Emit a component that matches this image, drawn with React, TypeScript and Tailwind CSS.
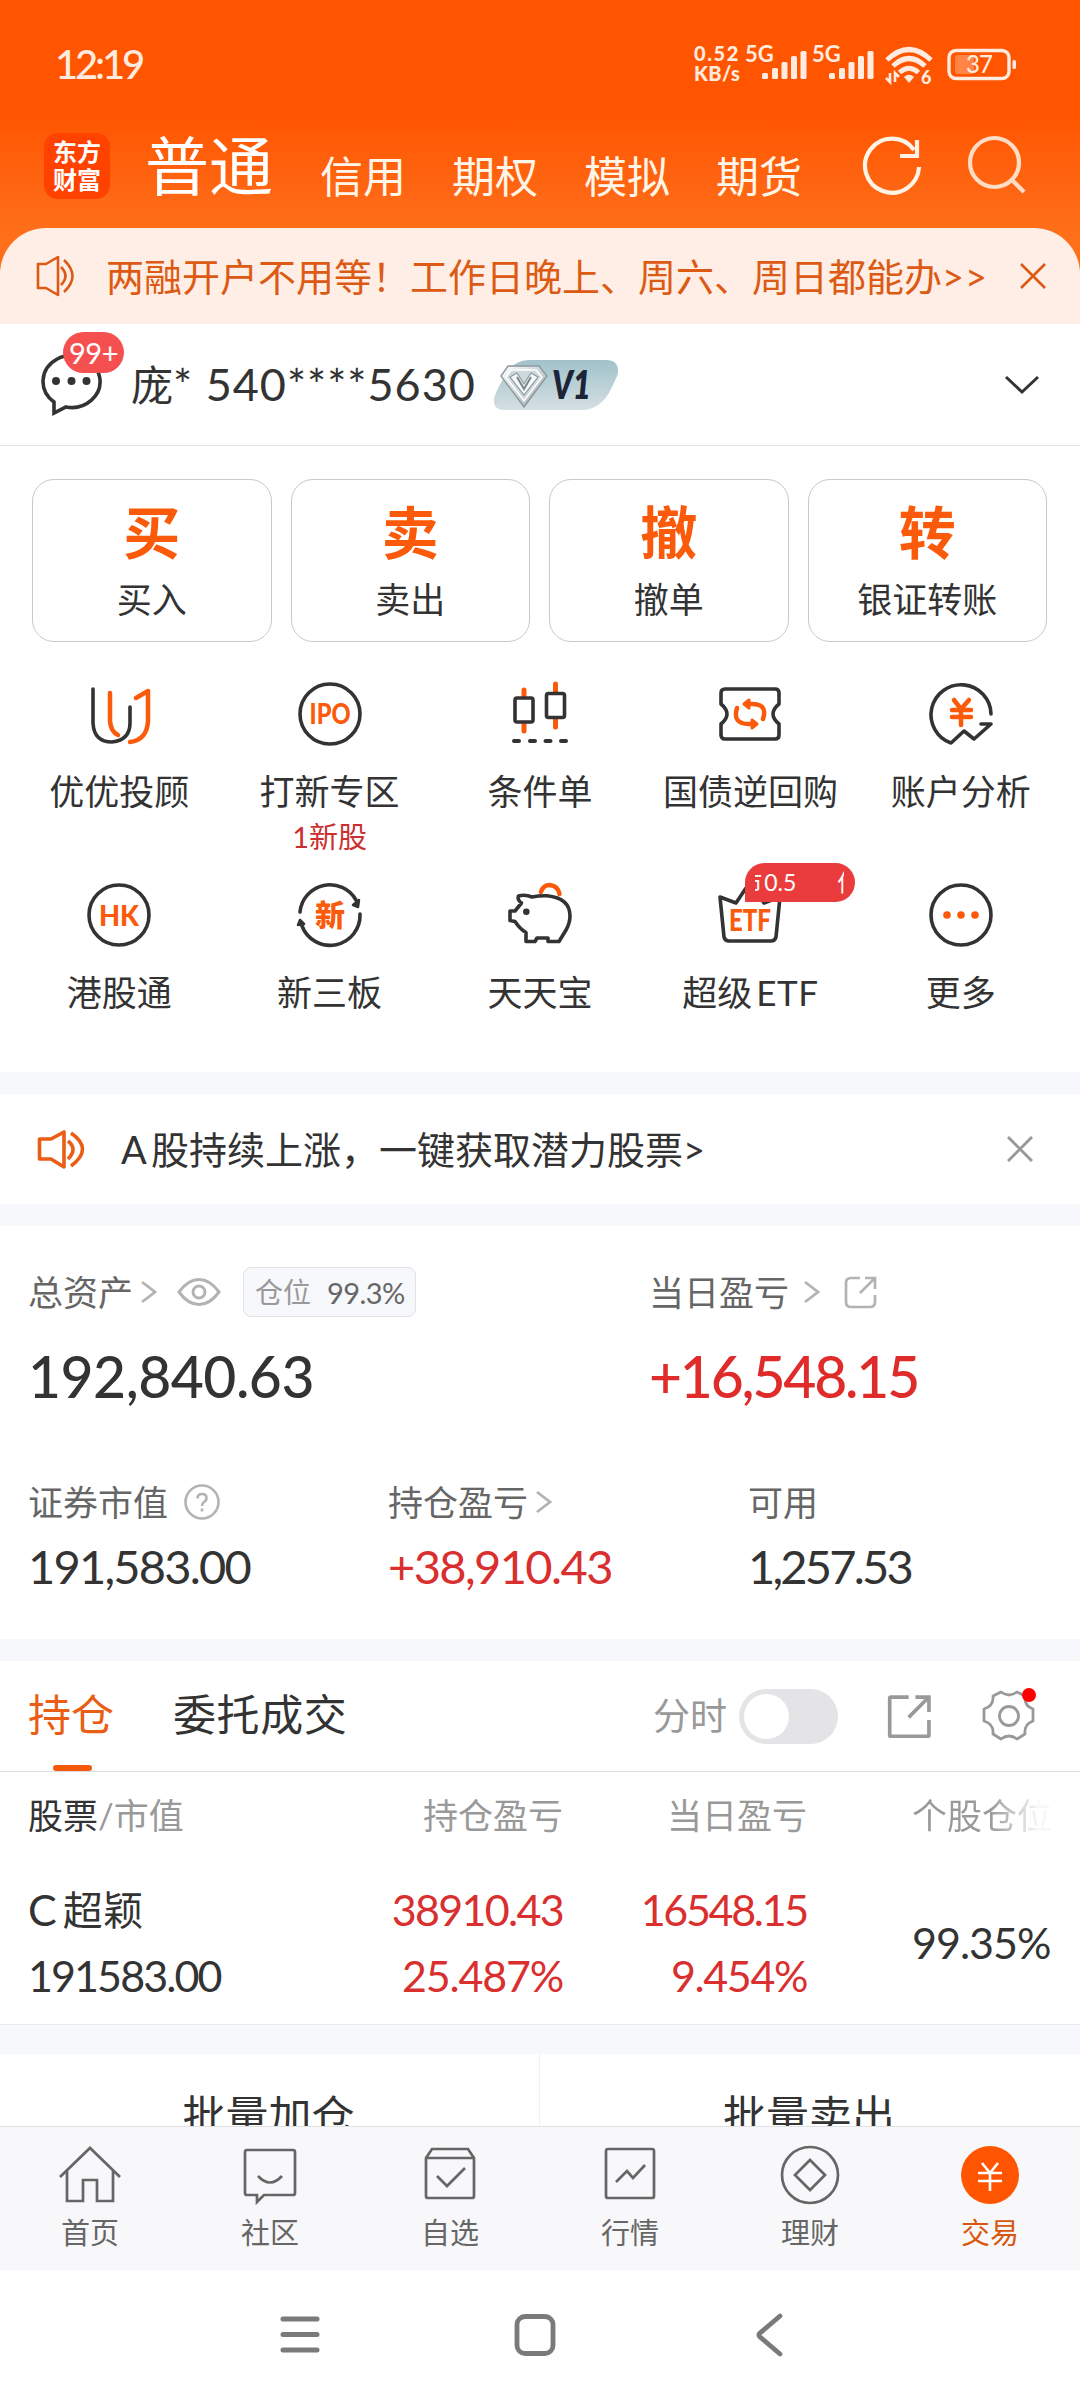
// 交易首页

import type { ReactNode } from 'react';

const DARK = '#333333';
const ORANGE = '#fa5a0a';

const 账户类型 = ['信用', '期权', '模拟', '期货'];

const 快捷操作 = [
  { 字: '买', 名称: '买入' },
  { 字: '卖', 名称: '卖出' },
  { 字: '撤', 名称: '撤单' },
  { 字: '转', 名称: '银证转账' },
];

export default function App() {
  return (
    <div className="flex h-[2400px] w-[1080px] flex-col overflow-hidden bg-white font-['Lato','Noto_Sans_CJK_SC',sans-serif] leading-none whitespace-nowrap text-[#333333]">
      <Header />
      <AccountRow />
      <QuickActions />
      <FeatureGrid />
      <div className="h-[22px] shrink-0 bg-[#f7f8fb]" />
      <Notice />
      <div className="h-[22px] shrink-0 bg-[#f7f8fb]" />
      <Assets />
      <div className="h-[22px] shrink-0 bg-[#f7f8fb]" />
      <Positions />
      <div className="h-[30px] shrink-0 border-t border-[#e8eaee] bg-[#f7f8fb]" />
      {/* 批量操作 */}
      <div className="flex h-[72px] shrink-0 overflow-hidden text-[43px]">
        <div className="w-[540px] border-r border-[#f0f0f2] pt-[40px] pr-[2px] text-center">批量加仓</div>
        <div className="w-[540px] pt-[40px] pr-[2px] text-center">批量卖出</div>
      </div>
      <TabBar />
      <SystemBar />
    </div>
  );
}

function Header() {
  return (
    <div className="h-[324px] shrink-0 bg-linear-to-b from-[#ff5500] from-[36%] to-[#ff6f1a] to-[72%]">
      {/* 状态栏 */}
      <div className="flex h-[128px] items-center pr-[61px] pl-[55px] text-[#ffebdf]">
        <span className="text-[40px] font-medium tracking-[-3.200px]">12:19</span>
        <StatusIcons />
      </div>

      {/* 账户类型 */}
      <div className="flex h-[100px] pr-[52px] pl-[44px] text-white">
        <div className="mt-[5px] flex h-[66px] w-[66px] flex-col items-center justify-center gap-[4px] rounded-[14px] bg-[#ff4200] text-[24px] font-bold">
          <span>东方</span>
          <span>财富</span>
        </div>
        <span className="mt-[6px] ml-[35px] w-[130px] text-[64px]">普通</span>
        <div className="mt-[27px] ml-[45px] flex gap-[46px] text-[43px] text-[#fff6ea]">
          {账户类型.map((名称) => (
            <span key={名称} className="w-[86px]">{名称}</span>
          ))}
        </div>
        <svg className="mt-[5px] ml-auto" width="64" height="64" viewBox="0 0 64 64" fill="none" stroke="#fff3e6" strokeWidth="4.200">
          <path d="M54 17 A27 27 0 1 0 59 34" />
          <path d="M57 7 V23 H40" />
        </svg>
        <svg className="mt-[5px] ml-[38px]" width="66" height="66" viewBox="0 0 66 66" fill="none" stroke="#ffdcc4" strokeWidth="4.200">
          <circle cx="32.500" cy="29.500" r="24.500" />
          <path d="M49 46 L62 59" />
        </svg>
      </div>

      {/* 顶部公告 */}
      <div className="flex h-[96px] items-center rounded-t-[46px] bg-[#ffeee5] pr-[34px] pl-[36px] text-[38px] text-[#dc5a14]">
        <svg width="42" height="42" viewBox="0 0 42 42" fill="none" stroke="#dc5a14" strokeWidth="2.600">
          <path d="M2 9 H10 L22 2 V40 L10 33 H2 Z" strokeLinejoin="round" />
          <path d="M25 12 Q34 21 25 30 M28 5 Q45 21 28 37" />
        </svg>
        <span className="ml-[28px]">两融开户不用等！工作日晚上、周六、周日都能办</span>
        <span className="tracking-[1px]">&gt;&gt;</span>
        <svg className="ml-auto" width="26" height="26" viewBox="0 0 26 26" stroke="#dc5a14" strokeWidth="2.600">
          <path d="M1 1 L25 25 M25 1 L1 25" />
        </svg>
      </div>
    </div>
  );
}

function StatusIcons() {
  return (
    <div className="ml-auto flex h-[40px] items-start">
      <div className="-mt-[1px] flex w-[51px] flex-col text-[20px] leading-[20px] font-black">
        <span className="tracking-[1.600px]">0.52</span>
        <span className="tracking-[0.400px]">KB/s</span>
      </div>
      <Signal />
      <Signal />
      <svg className="ml-[6px] overflow-visible" width="50" height="40" viewBox="0 0 50 40" fill="none" stroke="#ffebdf" strokeWidth="5">
        <path d="M2 16 Q24 -5 46 16" />
        <path d="M8 22 Q24 7 40 22" />
        <path d="M14.500 28.500 Q24 20 33.500 28.500" />
        <path d="M19 33 Q24 28.500 29 33 L24 39 Z" fill="#ffebdf" stroke="none" />
        <path d="M5 29 V38 L1 34 M10 38 V29 L14 33" strokeWidth="2.600" />
        <text x="36" y="40" fill="#ffebdf" stroke="none" fontSize="18" fontWeight="900">6</text>
      </svg>
      <svg className="ml-[12px]" width="72" height="40" viewBox="0 0 72 40" fill="none">
        <rect x="2" y="6.500" width="60" height="28" rx="7" stroke="#ffebdf" strokeWidth="3.400" />
        <rect x="8" y="11" width="19" height="19" rx="3" fill="#ff8445" />
        <rect x="65.500" y="16" width="3.500" height="9" rx="1.500" fill="#ffebdf" />
        <text x="32" y="29" textAnchor="middle" fill="#ffebdf" fontSize="24" fontWeight="500" letterSpacing="-1">37</text>
      </svg>
    </div>
  );
}

function Signal() {
  return (
    <svg className="overflow-visible" width="67" height="40" viewBox="0 0 67 40" fill="#ffebdf">
      <text x="0" y="18" fontSize="22" fontWeight="700">5G</text>
      <rect x="17" y="29" width="6" height="6" rx="1.500" />
      <rect x="27" y="24" width="6" height="11" rx="1.500" />
      <rect x="36.500" y="18" width="6" height="17" rx="1.500" />
      <rect x="46" y="12" width="6" height="23" rx="1.500" />
      <rect x="55.500" y="7" width="6" height="28" rx="1.500" />
    </svg>
  );
}

function AccountRow() {
  return (
    <div className="flex h-[122px] shrink-0 items-center border-b border-[#e2e2e2] pr-[40px] pl-[38px]">
      <div className="relative h-[66px] w-[66px]">
        <svg width="66" height="66" viewBox="0 0 66 66" fill="none" stroke={DARK} strokeWidth="3.600">
          <path d="M16 50 A28.500 26 0 1 1 28 55 L16 61 Z" />
          <g fill={DARK} stroke="none">
            <circle cx="18" cy="29" r="4" />
            <circle cx="33.500" cy="29" r="4" />
            <circle cx="48.500" cy="29" r="4" />
          </g>
        </svg>
        <span className="absolute -top-[20px] left-[25px] flex h-[41px] w-[61px] items-center justify-center rounded-full bg-[#f64f50] text-[29px] tracking-[-0.500px] text-white">
          99+
        </span>
      </div>
      <span className="ml-[27px] text-[42px]">庞</span>
      <span className="text-[45px] tracking-[1px]">* 540****5630</span>
      <VipBadge />
      <svg className="ml-auto" width="36" height="20" viewBox="0 0 36 20" fill="none" stroke={DARK} strokeWidth="3">
        <path d="M2 2 L18 17 L34 2" />
      </svg>
    </div>
  );
}

function VipBadge() {
  return (
    <svg className="ml-[17px]" width="128" height="52" viewBox="0 0 128 52">
      <defs>
        <linearGradient id="vip" x1="0" y1="0" x2="0" y2="1">
          <stop offset="0" stopColor="#a0c2cb" />
          <stop offset="1" stopColor="#d5dfe2" />
        </linearGradient>
        <linearGradient id="gem" x1="0" y1="0" x2="1" y2="1">
          <stop offset="0" stopColor="#ffffff" />
          <stop offset="1" stopColor="#98a4a9" />
        </linearGradient>
      </defs>
      <path d="M36 1 H113 Q126 1 125 14 Q124 18 118 30 Q108 51 88 51 H12 Q0 51 1 40 Q2 34 9 22 Q18 1 36 1 Z" fill="url(#vip)" />
      <path d="M15 7 H46 L54 17 L31 48 L8 17 Z" fill="url(#gem)" stroke="#8b999f" strokeWidth="1.400" />
      <path d="M18 11 H43 L49 18 L31 42 L13 18 Z" fill="#cfd9dd" stroke="#ffffff" strokeWidth="1.500" />
      <path d="M17 18 L24 14 L31 25 L38 14 L45 18 L31 36 Z" fill="#f4f8f9" stroke="#8b999f" strokeWidth="1.200" />
      <path d="M24 18 L31 30 L38 18" fill="none" stroke="#78878e" strokeWidth="2" />
      <text x="59" y="40" fontSize="39" fontWeight="800" fontStyle="italic" fill="#1d2438" textLength="39" lengthAdjust="spacingAndGlyphs">V1</text>
    </svg>
  );
}

function QuickActions() {
  return (
    <div className="grid h-[197px] shrink-0 grid-cols-4 gap-[19px] pt-[33px] pr-[33px] pl-[32px]">
      {快捷操作.map((项) => (
        <div key={项.字} className="flex h-[163px] flex-col items-center rounded-[22px] border border-[#c9c9c9] pt-[24px]">
          <span className="text-[57px] font-bold text-[#fa5a0a]">{项.字}</span>
          <span className="mt-[21px] text-[35px]">{项.名称}</span>
        </div>
      ))}
    </div>
  );
}

function FeatureGrid() {
  return (
    <div className="grid h-[429px] shrink-0 grid-cols-5 grid-rows-[201px_auto] px-[14px] pt-[36px] text-[35px]">
      <Feature 名称="优优投顾">
        <path d="M10 10 V44 Q11 63 29 63 Q47 61 47 44 V28" />
        <path d="M27 14 V42 Q28 53 35 56 M53 19 L65 12 V42 Q64 61 47 63" stroke={ORANGE} strokeWidth="4.500" />
      </Feature>
      <Feature 名称="打新专区" 提示="1新股">
        <circle cx="36" cy="35" r="30" />
        <IconText size={28} width={41}>IPO</IconText>
      </Feature>
      <Feature 名称="条件单">
        <path d="M20 11 V17 M20 45 V52 M51.500 5 V13 M51.500 41 V48" stroke={ORANGE} strokeWidth="5" />
        <rect x="11" y="19" width="18" height="24" rx="2" />
        <rect x="42.500" y="14.500" width="18" height="24" rx="2" />
        <path d="M10 62 H15 M26 62 H31 M41.500 62 H46.500 M57 62 H62" strokeWidth="4" />
      </Feature>
      <Feature 名称="国债逆回购">
        <path d="M11 10 H61 Q65 10 65 14 V25 Q53 35 65 45 V56 Q65 60 61 60 H11 Q7 60 7 56 V45 Q19 35 7 25 V14 Q7 10 11 10 Z" />
        <g stroke={ORANGE} strokeWidth="4.500">
          <path d="M23 29 Q18 45 35 45 H39 M49 40 Q54 25 38 25 H34" />
          <path d="M35 21 V29 L30 25 Z M38 41 V49 L43 45 Z" fill={ORANGE} strokeWidth="3" />
        </g>
      </Feature>
      <Feature 名称="账户分析">
        <path d="M66 35 A30 30 0 1 0 26 64 L39 52 L49 60 L66 45 H56" />
        <path d="M29 21 L36 30 L44 21 M36 30 V46 M27 31 H46 M27 38 H46" stroke={ORANGE} strokeWidth="4.500" />
      </Feature>

      <Feature 名称="港股通">
        <circle cx="36" cy="35" r="30" />
        <IconText size={29} width={40}>HK</IconText>
      </Feature>
      <Feature 名称="新三板">
        <path d="M6 32 A30 30 0 0 1 62 20 M66 34 A30 30 0 0 1 8 46" />
        <path d="M59 25 L65 20 L64 27 Z M4 45 L6 40 L10 44 Z" fill={DARK} strokeWidth="2.500" />
        <IconText size={30} width={30}>新</IconText>
      </Feature>
      <Feature 名称="天天宝">
        <path d="M37 12 Q39 5 46 5 Q54 6 55.500 14" stroke={ORANGE} strokeWidth="4.500" />
        <path d="M6 31 H11 L17.500 23 Q13 20 14.500 16 Q21 14 28 17 Q35 15.500 43 15.700 Q66 18 66 36 Q66 43 62 50 L55 61.500 H44 V58 H33 L31 61.500 H22 V52.500 Q16 49 11 41.500 L6 40.500 Z" />
        <circle cx="22.300" cy="31.700" r="3.300" fill={DARK} stroke="none" />
      </Feature>
      <Feature 名称={<>超级<span className="ml-[4px] tracking-[0.500px]">ETF</span></>} 角标>
        <path d="M6 17 L22 23 L32 8 Q36 4 40 8 L50 23 L66 17 L62 57 Q61 61 57 61 H15 Q11 61 10 57 Z" />
        <text x="36" y="51" textAnchor="middle" fontSize="30" fontWeight="900" fill={ORANGE} stroke="none" textLength="42" lengthAdjust="spacingAndGlyphs">ETF</text>
      </Feature>
      <Feature 名称="更多">
        <circle cx="36" cy="35" r="30" />
        <g fill={ORANGE} stroke="none">
          <circle cx="22" cy="35" r="3.800" />
          <circle cx="36" cy="35" r="3.800" />
          <circle cx="50" cy="35" r="3.800" />
        </g>
      </Feature>
    </div>
  );
}

function IconText({ size, width, children }: { size: number; width: number; children: ReactNode }) {
  return (
    <text x="36" y={35 + size * 0.37} textAnchor="middle" fontSize={size} fontWeight="900" fill={ORANGE} stroke="none" textLength={width} lengthAdjust="spacingAndGlyphs">
      {children}
    </text>
  );
}

function Feature({ 名称, 提示, 角标, children }: { 名称: ReactNode; 提示?: string; 角标?: boolean; children: ReactNode }) {
  return (
    <div className="relative flex flex-col items-center">
      <svg width="72" height="70" viewBox="0 0 72 70" fill="none" stroke={DARK} strokeWidth="3.600" strokeLinecap="round" strokeLinejoin="round">
        {children}
      </svg>
      <span className="mt-[25px]">{名称}</span>
      {提示 && <span className="mt-[13px] text-[29px] text-[#cc2f2f]">{提示}</span>}
      {角标 && (
        <span className="absolute -top-[17px] left-[100px] flex h-[39px] w-[110px] items-center rounded-[20px] rounded-bl-none bg-[#ea3c3c] pr-[11px] pl-[10px] text-[23px] text-white">
          <ClippedChar 字="市" 对齐="右" />
          <span className="ml-[2px]">0.5</span>
          <span className="ml-auto flex"><ClippedChar 字="亿" 对齐="左" /></span>
        </span>
      )}
    </div>
  );
}

// 滚动到一半的文字，只露出一小截
function ClippedChar({ 字, 对齐 }: { 字: string; 对齐: '左' | '右' }) {
  return (
    <span className={对齐 === '右' ? 'flex w-[7px] justify-end overflow-hidden' : 'flex w-[7px] overflow-hidden'}>
      <span>{字}</span>
    </span>
  );
}

function Notice() {
  return (
    <div className="flex h-[110px] shrink-0 items-center pr-[47px] pl-[36px] text-[38px]">
      <svg width="50" height="42" viewBox="0 0 50 42" fill="none" stroke="#ea5d14" strokeWidth="3.600">
        <path d="M3.500 11 H15 L28 4 V39 L15 31 H3.500 Z" strokeLinejoin="round" />
        <path d="M32 13 Q42 21 32 31 M35 5 Q58 21 35 38" />
      </svg>
      <span className="ml-[35px] w-[30px]">A</span>
      <span>股持续上涨，一键获取潜力股票&gt;</span>
      <svg className="ml-auto" width="26" height="26" viewBox="0 0 26 26" stroke="#999999" strokeWidth="3">
        <path d="M1 1 L25 25 M25 1 L1 25" />
      </svg>
    </div>
  );
}

function Assets() {
  return (
    <div className="h-[413px] shrink-0 px-[28px] pt-[41px] text-[35px] text-[#666666]">
      <div className="flex">
        <div className="w-[621px]">
          <div className="flex h-[50px] items-center">
            <span>总资产</span>
            <Chevron className="ml-[7px]" />
            <svg className="ml-[19px]" width="44" height="30" viewBox="0 0 44 30" fill="none" stroke="#b3b3b3" strokeWidth="3">
              <path d="M2 15 Q11 2.500 22 2.500 Q33 2.500 42 15 Q33 27.500 22 27.500 Q11 27.500 2 15 Z" />
              <circle cx="22" cy="15" r="6" />
            </svg>
            <div className="ml-[22px] flex h-[50px] w-[173px] items-center rounded-[8px] border border-[#e3e3e6] bg-[#f7f8fb] pl-[11px]">
              <span className="text-[28px] text-[#999999]">仓位</span>
              <span className="ml-[16px] text-[29px] tracking-[-0.600px]">99.3%</span>
            </div>
          </div>
          <div className="mt-[31px] text-[57px] font-medium tracking-[-0.500px] text-[#333333]">192,840.63</div>
        </div>
        <div>
          <div className="flex h-[50px] items-center">
            <span>当日盈亏</span>
            <Chevron className="ml-[14px]" />
            <ShareIcon className="ml-[23px]" size={34} color="#b3b3b3" radius={5} />
          </div>
          <div className="mt-[31px] text-[57px] font-medium tracking-[-2.200px] text-[#e02b2b]">+16,548.15</div>
        </div>
      </div>

      <div className="mt-[78px] grid grid-cols-[360px_360px_auto]">
        <Stat 标签="证券市值" 数值="191,583.00" 样式="tracking-[-1.800px] text-[#333333]">
          <svg className="ml-[15px]" width="38" height="38" viewBox="0 0 38 38" fill="none" stroke="#b3b3b3" strokeWidth="2.600">
            <circle cx="19" cy="19" r="16.500" />
            <path d="M14.500 15.500 Q14.500 11 19 11 Q23.500 11 23.500 15 Q23.500 17.500 21 19 Q19 20.500 19 23 M19 25.500 V28.500" />
          </svg>
        </Stat>
        <Stat 标签="持仓盈亏" 数值="+38,910.43" 样式="tracking-[-1.600px] text-[#d92f2f]">
          <Chevron className="ml-[7px]" />
        </Stat>
        <Stat 标签="可用" 数值="1,257.53" 样式="tracking-[-2.800px] text-[#333333]" />
      </div>
    </div>
  );
}

function Stat({ 标签, 数值, 样式, children }: { 标签: string; 数值: string; 样式: string; children?: ReactNode }) {
  return (
    <div>
      <div className="flex h-[38px] items-center">
        <span>{标签}</span>
        {children}
      </div>
      <div className={`mt-[22px] text-[47px] ${样式}`}>{数值}</div>
    </div>
  );
}

function Chevron({ className }: { className: string }) {
  return (
    <svg className={className} width="18" height="24" viewBox="0 0 18 24" fill="none" stroke="#b3b3b3" strokeWidth="2.800">
      <path d="M2 2 L15 12 L2 22" />
    </svg>
  );
}

function ShareIcon({ className, size, color, radius }: { className: string; size: number; color: string; radius: number }) {
  const r = radius;
  return (
    <svg className={className} width={size} height={size} viewBox="0 0 34 34" fill="none" stroke={color} strokeWidth="2.700">
      <path d={`M16 3 H${2 + r} Q2 3 2 ${3 + r} V${32 - r} Q2 32 ${2 + r} 32 H${31 - r} Q31 32 31 ${32 - r} V20`} />
      <path d="M21 3 H31 V14 M31 3 L16 18" />
    </svg>
  );
}

function Positions() {
  return (
    <div className="h-[363px] shrink-0">
      {/* 持仓 / 委托成交 */}
      <div className="flex h-[111px] items-center border-b border-[#dddddd] pr-[43px] pl-[28px] text-[43px]">
        <div className="relative flex h-full items-center pb-[3px] text-[#ea5d14]">
          持仓
          <span className="absolute bottom-0 left-[25px] h-[6px] w-[39px] rounded-full bg-[#f55a0c]" />
        </div>
        <span className="mb-[3px] ml-[59px] tracking-[0.600px]">委托成交</span>
        <span className="mb-[2px] ml-auto text-[37px] text-[#999999]">分时</span>
        <div className="ml-[12px] flex h-[55px] w-[99px] items-center rounded-full bg-[#e4e4e6] pl-[5px]">
          <span className="h-[45px] w-[45px] rounded-full bg-white" />
        </div>
        <ShareIcon className="ml-[49px]" size={46} color="#999999" radius={1} />
        <div className="relative ml-[48px] h-[54px] w-[56px]">
          <svg width="56" height="54" viewBox="0 0 56 54" fill="none" stroke="#999999" strokeWidth="2.800" strokeLinejoin="round">
            <path d="M20 3 Q28 9 36 3 L44 7 Q43 17 52 20 V32 Q43 35 44 45 L36 50 Q28 44 20 50 L12 45 Q13 35 3 32 V20 Q13 17 12 7 Z" />
            <circle cx="28" cy="27" r="9.500" />
          </svg>
          <span className="absolute -top-[1px] right-[1px] h-[14px] w-[14px] rounded-full bg-[#ff0000]" />
        </div>
      </div>

      {/* 表头 */}
      <div className="flex h-[87px] items-center pl-[28px] text-[35px] text-[#999999]">
        <div className="w-[272px]"><span className="text-[#333333]">股票</span>/市值</div>
        <span className="w-[263px] text-right">持仓盈亏</span>
        <span className="w-[244px] text-right">当日盈亏</span>
        <span className="ml-[105px] bg-linear-to-r from-[#999999] from-[55%] to-[#f7f7f7] to-[90%] bg-clip-text text-transparent">个股仓位</span>
      </div>

      <div className="flex pt-[29px] pl-[28px] text-[43px]">
        <div className="flex w-[272px] flex-col gap-[23px] tracking-[-1.900px]">
          <div className="flex h-[43px] items-center">
            <span>C</span>
            <span className="ml-[8px] text-[40px] tracking-[0.500px]">超颖</span>
          </div>
          <span>191583.00</span>
        </div>
        <div className="flex w-[263px] flex-col items-end gap-[23px] text-[#d92f2f]">
          <span className="tracking-[-1.700px]">38910.43</span>
          <span className="tracking-[-1.200px]">25.487%</span>
        </div>
        <div className="flex w-[244px] flex-col items-end gap-[23px] text-[#d92f2f]">
          <span className="tracking-[-2.300px]">16548.15</span>
          <span className="tracking-[-1.400px]">9.454%</span>
        </div>
        <span className="mt-[33px] ml-[105px] tracking-[-1px]">99.35%</span>
      </div>
    </div>
  );
}

function TabBar() {
  return (
    <div className="grid h-[144px] shrink-0 grid-cols-6 border-t border-[#e0e0e2] bg-[#f8f8fb]">
      <Tab 名称="首页">
        <path d="M2 33 L32 4 L62 33" />
        <path d="M9 27 V57 H25 V36 H39 V57 H55 V27" />
      </Tab>
      <Tab 名称="社区">
        <path d="M9 6 H55 Q57 6 57 8 V49 Q57 51 55 51 H26 L19 58 V51 H9 Q7 51 7 49 V8 Q7 6 9 6 Z" />
        <path d="M20 32 Q32 45 44 32" />
      </Tab>
      <Tab 名称="自选">
        <path d="M8 14 L14 5 H50 L56 14 V52 Q56 54 54 54 H10 Q8 54 8 52 Z M8 14 H56" />
        <path d="M19 32 L29 42 L47 24" />
      </Tab>
      <Tab 名称="行情">
        <rect x="8" y="5" width="48" height="49" rx="2" />
        <path d="M18 38 L29 27 L35 34 L47 21" />
      </Tab>
      <Tab 名称="理财">
        <circle cx="32" cy="31" r="28" />
        <path d="M32 16 L47 31 L32 46 L17 31 Z" />
      </Tab>
      <Tab 名称="交易" 选中>
        <circle cx="32" cy="31" r="29" fill="#ff5500" stroke="none" />
        <path d="M24 19 L32 29 L40 19 M32 29 V47 M20 29 H44 M20 37 H44" stroke="#ffffff" strokeWidth="2.600" />
      </Tab>
    </div>
  );
}

function Tab({ 名称, 选中, children }: { 名称: string; 选中?: boolean; children: ReactNode }) {
  return (
    <div className="flex flex-col items-center pt-[17px]">
      <svg width="64" height="62" viewBox="0 0 64 62" fill="none" stroke="#666666" strokeWidth="2.700">
        {children}
      </svg>
      <span className={选中 ? 'mt-[12px] text-[29px] text-[#d9560f]' : 'mt-[12px] text-[29px] text-[#666666]'}>{名称}</span>
    </div>
  );
}

// 系统导航键
function SystemBar() {
  return (
    <div className="flex h-[130px] shrink-0 items-center bg-[#fefefe] pl-[279px]">
      <svg width="42" height="44" viewBox="0 0 42 44" stroke="#7a7a7a" strokeWidth="5" strokeLinecap="round">
        <path d="M4 6 H38 M4 21.500 H38 M4 37 H38" />
      </svg>
      <svg className="ml-[192px]" width="44" height="44" viewBox="0 0 44 44" fill="none" stroke="#7a7a7a" strokeWidth="4.800">
        <rect x="4" y="3.500" width="36" height="37" rx="8" />
      </svg>
      <svg className="ml-[198px]" width="30" height="44" viewBox="0 0 30 44" fill="none" stroke="#7a7a7a" strokeWidth="4.800" strokeLinecap="round">
        <path d="M25 3 L5 20 Q3 22 5 24 L25 41" />
      </svg>
    </div>
  );
}
